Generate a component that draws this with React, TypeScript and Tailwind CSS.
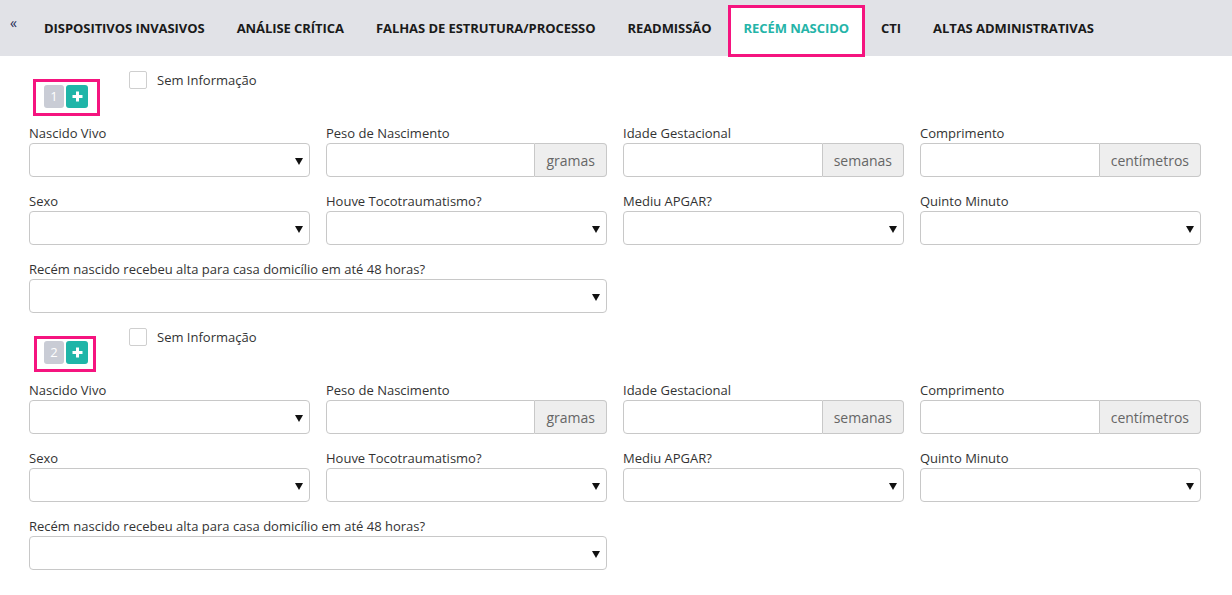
import React from 'react';

const tabs = [
  'DISPOSITIVOS INVASIVOS',
  'ANÁLISE CRÍTICA',
  'FALHAS DE ESTRUTURA/PROCESSO',
  'READMISSÃO',
  'RECÉM NASCIDO',
  'CTI',
  'ALTAS ADMINISTRATIVAS',
];

const Arrow = () => (
  <svg width="8" height="7" viewBox="0 0 8 7" className="absolute right-[6px] top-[14px]">
    <polygon points="0,0 8,0 4,7" fill="#111" />
  </svg>
);

const Select = () => (
  <div className="relative h-[34px] rounded-[4px] border border-[#c8c8c8] bg-white">
    <Arrow />
  </div>
);

const InputAddon = ({ unit }: { unit: string }) => (
  <div className="flex h-[34px]">
    <div className="flex-1 rounded-l-[4px] border border-[#c8c8c8] bg-white" />
    <div className="flex items-center rounded-r-[4px] border border-l-0 border-[#c8c8c8] bg-[#eeeeee] px-[11px] text-[14px] text-[#666]">
      {unit}
    </div>
  </div>
);

const Field = ({ label, children, wide }: { label: string; children: React.ReactNode; wide?: boolean }) => (
  <div className={wide ? 'col-span-2' : ''}>
    <div className="mb-px text-[13px] leading-[18px] text-[#333]">{label}</div>
    {children}
  </div>
);

type BoxPad = { ml: string; pad: string; check: string; after: string };

const RecemNascido = ({ n, box }: { n: number; box: BoxPad }) => (
  <section>
    <div className="flex items-start">
      <div className={`mt-[8px] flex gap-[2px] border-[3px] border-[#f5147f] ${box.ml} ${box.pad}`}>
        <span className="flex h-[23px] w-[20px] items-center justify-center rounded-[3px] bg-[#c9ccd5] text-[13px] text-white">
          {n}
        </span>
        <button className="flex h-[23px] w-[22px] items-center justify-center rounded-[3px] bg-[#1fb5a8]">
          <svg width="11" height="11" viewBox="0 0 11 11">
            <path d="M5.5 0.5v10M0.5 5.5h10" stroke="#fff" strokeWidth="3" />
          </svg>
        </button>
      </div>
      <div className={`flex items-center ${box.check}`}>
        <span className="h-[18px] w-[18px] rounded-[2px] border border-[#cfcfcf] bg-white" />
        <span className="ml-[10px] text-[13px] leading-[18px] text-[#333]">Sem Informação</span>
      </div>
    </div>

    <div className={`grid grid-cols-4 gap-x-4 gap-y-[15px] ${box.after}`}>
      <Field label="Nascido Vivo"><Select /></Field>
      <Field label="Peso de Nascimento"><InputAddon unit="gramas" /></Field>
      <Field label="Idade Gestacional"><InputAddon unit="semanas" /></Field>
      <Field label="Comprimento"><InputAddon unit="centímetros" /></Field>
      <Field label="Sexo"><Select /></Field>
      <Field label="Houve Tocotraumatismo?"><Select /></Field>
      <Field label="Mediu APGAR?"><Select /></Field>
      <Field label="Quinto Minuto"><Select /></Field>
      <Field label="Recém nascido recebeu alta para casa domicílio em até 48 horas?" wide>
        <Select />
      </Field>
    </div>
  </section>
);

export default function App() {
  return (
    <div className="min-h-[595px] w-[1232px] bg-white font-['Open_Sans',sans-serif]">
      <nav className="flex h-[56px] items-start bg-[#e1e2e7]">
        <span className="ml-[10px] mt-[14px] w-[18px] text-[14px] leading-[18px] text-[#1c2b55]">«</span>
        {tabs.map((t) =>
          t === 'RECÉM NASCIDO' ? (
            <div
              key={t}
              className="mt-[5px] h-[52px] border-[3px] border-[#f5147f] bg-white px-[13px] pt-[11px] text-[13px] font-bold leading-[18px] tracking-[-0.06px] text-[#25b4a8]"
            >
              {t}
            </div>
          ) : (
            <div key={t} className="px-4 pt-[19px] text-[13px] font-bold leading-[18px] tracking-[-0.06px] text-[#1a1a1a]">
              {t}
            </div>
          )
        )}
      </nav>

      <div className="flex flex-col gap-[15px] pl-[29px] pr-[31px] pt-[15px]">
        <RecemNascido
          n={1}
          box={{ ml: 'ml-[4px]', pad: 'pl-[8px] pr-[9px] pt-[3px] pb-[5px]', check: 'ml-[29px]', after: 'mt-[8px]' }}
        />
        <RecemNascido
          n={2}
          box={{ ml: 'ml-[5px]', pad: 'pl-[7px] pr-[5px] pt-[2px] pb-[5px]', check: 'ml-[33px]', after: 'mt-[9px]' }}
        />
      </div>
    </div>
  );
}
